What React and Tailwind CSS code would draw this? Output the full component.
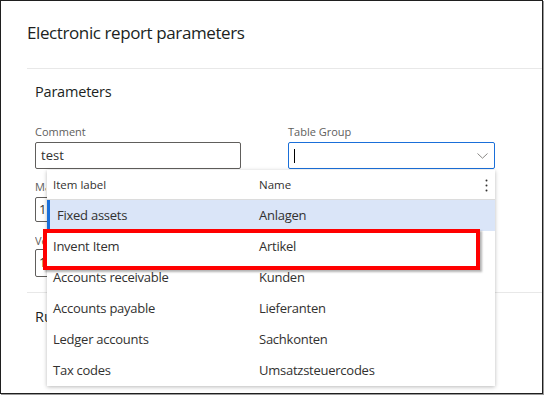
import React from "react";

const rows = [
  ["Invent Item", "Artikel"],
  ["Accounts receivable", "Kunden"],
  ["Accounts payable", "Lieferanten"],
  ["Ledger accounts", "Sachkonten"],
  ["Tax codes", "Umsatzsteuercodes"],
];

export default function App() {
  return (
    <div
      className="relative w-[544px] h-[395px] bg-white text-[#323130]"
      style={{ fontFamily: '"Open Sans", "Noto Sans", sans-serif' }}
    >
      <div className="relative w-[543px] h-[394px] border border-[#1f1f1f] shadow-[1px_1px_0_#9a9a9a] overflow-hidden">
        {/* Title */}
        <div className="pl-[26px] pt-[20px] h-[67px]">
          <h1 className="text-[17px] leading-[24px] tracking-[-0.4px] text-[#201f1e]">Electronic report parameters</h1>
        </div>
        <div className="ml-[26px] h-px bg-[#e8e8e8]" />

        {/* Parameters section */}
        <div className="pl-[34px] pt-[13px]">
          <h2 className="text-[14.5px] leading-[20px] tracking-[-0.2px] text-[#201f1e]">Parameters</h2>
          <div className="mt-[23px] flex gap-[47px]">
            <div className="w-[206px]">
              <div className="text-[11px] leading-[14px] text-[#605e5c]">Comment</div>
              <div className="mt-[3px] h-[27px] border border-[#605e5c] rounded-[2px] px-[5px] flex items-center text-[13px]">
                test
              </div>
            </div>
            <div className="w-[207px]">
              <div className="text-[11px] leading-[14px] text-[#605e5c]">Table Group</div>
              <div className="mt-[3px] h-[27px] border border-[#1a6fd9] rounded-[2px] pl-[5px] pr-[6px] flex items-center justify-between">
                <div className="w-px h-[14px] bg-black" />
                <svg width="11" height="6" viewBox="0 0 11 6" fill="none">
                  <path d="M0.5 0.5 L5.5 5.2 L10.5 0.5" stroke="#8a8886" strokeWidth="1" />
                </svg>
              </div>
            </div>
          </div>

          <div className="mt-[11px] w-[206px]">
            <div className="w-[11px] overflow-hidden whitespace-nowrap text-[11px] leading-[14px] text-[#605e5c]">Maximum records</div>
            <div className="mt-[3px] h-[25px] border border-[#605e5c] rounded-[2px] px-[3px] flex items-center text-[13px]">
              <span className="w-[8px] overflow-hidden">1</span>
            </div>
          </div>
          <div className="mt-[12px] w-[206px]">
            <div className="w-[11px] overflow-hidden whitespace-nowrap text-[11px] leading-[14px] text-[#605e5c]">Version</div>
            <div className="mt-[1px] h-[28px] border border-[#605e5c] rounded-[2px] px-[3px] flex items-center text-[13px]">
              <span className="w-[8px] overflow-hidden">1</span>
            </div>
          </div>
        </div>
        <div className="ml-[26px] mt-[15px] h-px bg-[#e8e8e8]" />
        <div className="pl-[34px] pt-[14px]">
          <h2 className="w-[12px] overflow-hidden whitespace-nowrap text-[14.5px] leading-[20px] text-[#201f1e]">Run settings</h2>
        </div>

        {/* Dropdown */}
        <div className="absolute left-[46px] top-[169px] w-[448px] bg-white shadow-[0_1px_4px_rgba(0,0,0,0.28)]">
          <div className="h-[30px] flex items-center border-b border-[#dcdcdc] text-[11.5px] text-[#323130] relative">
            <div className="pl-[6px] w-[212px]">Item label</div>
            <div>Name</div>
            <svg className="absolute right-[7px] top-[9px]" width="3" height="13" viewBox="0 0 3 13">
              <circle cx="1.5" cy="1.5" r="1" fill="#323130" />
              <circle cx="1.5" cy="6.5" r="1" fill="#323130" />
              <circle cx="1.5" cy="11.5" r="1" fill="#323130" />
            </svg>
          </div>
          <div className="h-[31px] flex items-center bg-[#dae5f8] border-l-[3px] border-[#1a6fd9] text-[13px] tracking-[-0.25px]">
            <div className="pl-[7px] w-[209px]">Fixed assets</div>
            <div>Anlagen</div>
          </div>
          {rows.map(([a, b]) => (
            <div key={a} className="h-[31px] flex items-center text-[13px] tracking-[-0.25px]">
              <div className="pl-[6px] w-[212px]">{a}</div>
              <div>{b}</div>
            </div>
          ))}
        </div>

        {/* Highlight annotation */}
        <div className="absolute left-[42px] top-[228px] w-[437px] h-[41px] border-[4px] border-[#ff0000] shadow-[2px_2px_2px_rgba(0,0,0,0.3)]" />
      </div>
    </div>
  );
}
